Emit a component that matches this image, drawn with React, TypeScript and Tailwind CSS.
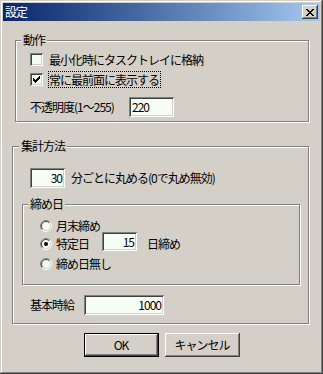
import type { ReactNode } from "react";

const sunken =
  "shadow-[inset_1px_1px_#808080,inset_-1px_-1px_#ffffff,inset_2px_2px_#404040,inset_-2px_-2px_#d4d0c8]";
const raised =
  "shadow-[inset_-1px_-1px_#404040,inset_1px_1px_#ffffff,inset_-2px_-2px_#808080,inset_2px_2px_#d4d0c8]";

// classic 7x7 check glyph, one string per row
const CHECK = ["......X", ".....XX", "X...XXX", "XX.XXX.", "XXXXX..", ".XXX...", "..X...."];

function GroupBox({
  label,
  labelLeft = "left-[5px]",
  className,
  children,
}: {
  label: string;
  labelLeft?: string;
  className: string;
  children: ReactNode;
}) {
  return (
    <div
      className={`relative border border-[#808080] shadow-[inset_1px_1px_#ffffff,1px_1px_#ffffff] ${className}`}
    >
      <span
        className={`absolute -top-[8px] ${labelLeft} bg-[#d4d0c8] px-[2px] leading-[14px]`}
      >
        {label}
      </span>
      {children}
    </div>
  );
}

function CheckBox({ checked }: { checked?: boolean }) {
  return (
    <span className={`relative h-[13px] w-[13px] shrink-0 bg-[#f5fbf5] ${sunken}`}>
      {checked && (
        <svg
          width="13"
          height="13"
          viewBox="0 0 13 13"
          shapeRendering="crispEdges"
          className="absolute left-0 top-0"
        >
          {CHECK.flatMap((row, y) =>
            row.split("").map((c, x) =>
              c === "X" ? <rect key={`${x}-${y}`} x={x + 3} y={y + 3} width="1" height="1" fill="#000" /> : null,
            ),
          )}
        </svg>
      )}
    </span>
  );
}

function Radio({ checked }: { checked?: boolean }) {
  return (
    <svg width="12" height="12" viewBox="0 0 12 12" className="shrink-0">
      <circle cx="6" cy="6" r="5" fill="#f5fbf5" />
      <path d="M2.1 9.9A5.5 5.5 0 0 1 9.9 2.1" stroke="#808080" strokeWidth="1" fill="none" />
      <path d="M9.9 2.1A5.5 5.5 0 0 1 2.1 9.9" stroke="#ffffff" strokeWidth="1" fill="none" />
      <path d="M2.8 9.2A4.5 4.5 0 0 1 9.2 2.8" stroke="#404040" strokeWidth="1" fill="none" />
      <path d="M9.2 2.8A4.5 4.5 0 0 1 2.8 9.2" stroke="#d4d0c8" strokeWidth="1" fill="none" />
      {checked && <circle cx="6" cy="6" r="2" fill="#000" />}
    </svg>
  );
}

function TextBox({ value, className, right }: { value: string; className: string; right?: boolean }) {
  return (
    <div
      className={`flex shrink-0 items-center bg-[#f5fdf5] px-[3px] leading-[14px] ${sunken} ${
        right ? "justify-end" : "justify-start"
      } ${className}`}
    >
      {value}
    </div>
  );
}

export default function App() {
  return (
    <div className="h-[374px] w-[323px] bg-[#d4d0c8] p-[3px] text-[12px] tracking-[-1px] text-black font-['MS_UI_Gothic','Noto_Sans_CJK_JP',sans-serif] shadow-[inset_-1px_-1px_#404040,inset_1px_1px_#d4d0c8,inset_-2px_-2px_#808080,inset_2px_2px_#ffffff]">
      {/* title bar */}
      <div className="flex h-[18px] items-center justify-between bg-gradient-to-r from-[#0a246a] to-[#a6caf0] pl-[2px] pr-[2px]">
        <span className="leading-[14px] text-white">設定</span>
        <button
          type="button"
          aria-label="閉じる"
          className={`flex h-[14px] w-[16px] items-center justify-center bg-[#d4d0c8] ${raised}`}
        >
          <svg width="8" height="7" viewBox="0 0 8 7" shapeRendering="crispEdges">
            <path
              d="M0 0h2v1h-2zM6 0h2v1h-2zM1 1h2v1h-2zM5 1h2v1h-2zM2 2h4v1h-4zM3 3h2v1h-2zM2 4h4v1h-4zM1 5h2v1h-2zM5 5h2v1h-2zM0 6h2v1h-2zM6 6h2v1h-2z"
              fill="#000"
            />
          </svg>
        </button>
      </div>

      {/* 動作 */}
      <GroupBox label="動作" className="ml-[12px] mt-[19px] h-[82px] w-[294px]">
        <div className="flex flex-col pl-[14px] pt-[8px]">
          <div className="flex h-[20px] items-center gap-[5px]">
            <CheckBox />
            <span className="whitespace-nowrap border border-transparent leading-[15px]">
              最小化時にタスクトレイに格納
            </span>
          </div>
          <div className="flex h-[20px] items-center gap-[5px]">
            <CheckBox checked />
            <span className="flex h-[17px] items-center whitespace-nowrap border border-dotted border-black pr-[1px] leading-[15px]">
              常に最前面に表示する
            </span>
          </div>
          <div className="mt-[8px] flex h-[20px] items-center">
            <span className="w-[99px] whitespace-nowrap">不透明度(1～255)</span>
            <TextBox value="220" className="h-[20px] w-[45px]" />
          </div>
        </div>
      </GroupBox>

      {/* 集計方法 */}
      <GroupBox label="集計方法" labelLeft="left-[6px]" className="ml-[9px] mt-[24px] h-[178px] w-[297px]">
        <div className="flex flex-col">
          <div className="ml-[17px] mt-[21px] flex h-[20px] items-center gap-[6px]">
            <TextBox value="30" right className="h-[20px] w-[35px]" />
            <span className="whitespace-nowrap">分ごとに丸める(0で丸め無効)</span>
          </div>

          <GroupBox label="締め日" className="ml-[9px] mt-[16px] h-[81px] w-[278px]">
            <div className="flex flex-col pl-[17px] pt-[13px]">
              <div className="flex h-[16px] items-center gap-[4px]">
                <Radio />
                <span>月末締め</span>
              </div>
              <div className="-mt-[2px] flex h-[20px] items-start">
                <div className="mt-[4px] flex h-[16px] w-[62px] items-center gap-[4px]">
                  <Radio checked />
                  <span>特定日</span>
                </div>
                <TextBox value="15" right className="h-[19px] w-[35px]" />
                <span className="ml-[10px] mt-[4px] flex h-[16px] items-center">日締め</span>
              </div>
              <div className="mt-[4px] flex h-[16px] items-center gap-[4px]">
                <Radio />
                <span>締め日無し</span>
              </div>
            </div>
          </GroupBox>

          <div className="ml-[17px] mt-[10px] flex h-[20px] items-center">
            <span className="w-[54px]">基本時給</span>
            <TextBox value="1000" right className="h-[20px] w-[80px]" />
          </div>
        </div>
      </GroupBox>

      {/* buttons */}
      <div className="mt-[9px] flex justify-center gap-[6px]">
        <button
          type="button"
          className="flex h-[24px] w-[75px] items-center justify-center border border-black bg-[#d4d0c8] shadow-[inset_-1px_-1px_#404040,inset_1px_1px_#ffffff,inset_-2px_-2px_#808080]"
        >
          OK
        </button>
        <button
          type="button"
          className={`flex h-[24px] w-[75px] items-center justify-center bg-[#d4d0c8] ${raised}`}
        >
          キャンセル
        </button>
      </div>
    </div>
  );
}
